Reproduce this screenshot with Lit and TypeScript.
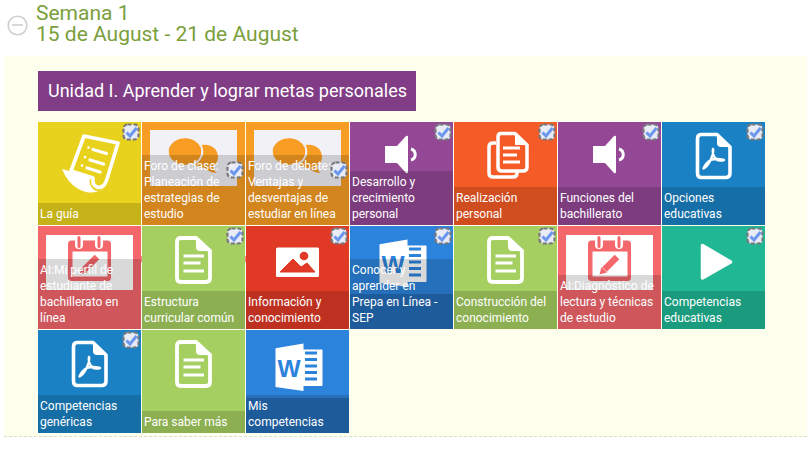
import { LitElement, html, svg, css } from 'lit'
import { customElement } from 'lit/decorators.js'

const ink = '#fff'

const docFrame = svg`
  <path d="M39 12.5H55L68 25V51Q68 55.500 63.500 55.500H39.500Q35.500 55.500 35.500 51V17Q35.500 12.500 39 12.500Z" fill="none" stroke=${ink} stroke-width="3.600" stroke-linejoin="round"/>
  <path d="M55 12.500V21Q55 25 59 25H68Z" fill=${ink}/>
`

const icons: Record<string, unknown> = {
  guide: svg`
    <path d="M46 14L80 21L69 57Q66 67 59 65Q54 63 55 56L33 49Z" fill="none" stroke=${ink} stroke-width="3.600" stroke-linejoin="round"/>
    <path d="M24 47L52 55Q50 63 56 68Q62 71 66 66Q58 72 48 70Q32 66 24 47Z" fill=${ink}/>
    <path d="M55 27.500L68.500 31.500M52 38L65.500 42M49 46L62 50" stroke=${ink} stroke-width="3.200" stroke-linecap="round"/>
    <path d="M50.500 25.500v.1M47 35v.1M44 43.500v.1" stroke=${ink} stroke-width="2.600" stroke-linecap="round"/>
  `,
  chat: svg`
    <rect x="8" y="8" width="87" height="56" fill="#f1f1f6"/>
    <path d="M60 23C69 22 76 27 76 35C76 39 74 42 71 44C71 47 73 50 75 51C69 51 65 48 63 46C56 46 50 42 50 35Z" fill="#f89d23"/>
    <ellipse cx="43" cy="29.500" rx="17.300" ry="14.300" fill="#f89d23" stroke="#f1f1f6" stroke-width="2"/>
  `,
  sound: svg`
    <path d="M35 24H47L56 14Q58 13 58 15V50Q58 52 56 51L47 41H35Z" fill=${ink}/>
    <path d="M61 27A5.700 5.700 0 0 1 61 38" fill="none" stroke=${ink} stroke-width="3"/>
  `,
  docs: svg`
    <path d="M47 11.500H61L73 23V45Q73 49 69 49H48Q44 49 44 45V15Q44 11.500 47 11.500Z" fill="none" stroke=${ink} stroke-width="3.500" stroke-linejoin="round"/>
    <path d="M61 11.500V23H73Z" fill=${ink}/>
    <path d="M42 21H39Q35 21 35 25V51Q35 55 39 55H59Q63 55 63 51V49" fill="none" stroke=${ink} stroke-width="3.500"/>
    <path d="M49 26H66M49 33H63M49 40H66" stroke=${ink} stroke-width="3"/>
  `,
  pdf: svg`
    ${docFrame}
    <path d="M41.500 46.500Q46 44 49 37Q52 30 51 27Q50 33 54 37Q57 39.500 62 38Q54 36 49 38Q44 40 41.500 46.500Z" fill="none" stroke=${ink} stroke-width="2.400" stroke-linejoin="round"/>
  `,
  doc: svg`
    <path d="M39 12H54L68 25V52Q68 56 64 56H39Q35 56 35 52V16Q35 12 39 12Z" fill="none" stroke=${ink} stroke-width="3.800" stroke-linejoin="round"/>
    <path d="M54 12V21Q54 25 58 25H68Z" fill=${ink}/>
    <path d="M41.500 30H62M41.500 37H58.500M41.500 45H62" stroke=${ink} stroke-width="3.200"/>
  `,
  image: svg`
    <rect x="30" y="21.500" width="43" height="29.500" rx="1.500" fill=${ink}/>
    <circle cx="58" cy="30" r="4.300" fill="#e03a27"/>
    <path d="M34 46L47 33L55 41L61 37L69 46Z" fill="#e03a27" stroke="#e03a27" stroke-linejoin="round"/>
  `,
  calendar: svg`
    <rect x="8" y="9" width="87" height="55" fill="#fff"/>
    <rect x="30" y="14.500" width="43" height="40.500" rx="3.500" fill="#f4676b"/>
    <rect x="34.500" y="25.500" width="35" height="25" fill="#fff"/>
    <rect x="37" y="12" width="8" height="11" rx="4" fill="#fff"/>
    <rect x="57" y="12" width="8" height="11" rx="4" fill="#fff"/>
    <path d="M41 11.500V20.500M61 11.500V20.500" stroke="#f4676b" stroke-width="3" stroke-linecap="round"/>
    <path d="M46.500 43.500L59 31" stroke="#f4676b" stroke-width="6.500"/>
    <path d="M41.500 48.500L43.500 41L49 46.500Z" fill="#f4676b"/>
  `,
  play: svg`
    <path d="M40.500 19.500L68.500 36L40.500 52Z" fill=${ink} stroke=${ink} stroke-width="3.500" stroke-linejoin="round"/>
  `,
  word: svg`
    <rect x="0" y="68" width="103" height="35" fill="rgba(0,0,0,.17)"/>
    <rect x="55" y="19.500" width="21.500" height="36.500" rx="1" fill=${ink}/>
    <path d="M59 23H71M59 29.500H71M59 36H71M59 42.500H71M59 49H71" stroke="#2c83dc" stroke-width="3.200"/>
    <path d="M29.500 18.300L57.500 13.500V61L29.500 57Z" fill=${ink}/>
    <text x="43" y="47" text-anchor="middle" font-family="'Liberation Sans', sans-serif" font-weight="700" font-size="24.500" fill="#2c83dc">W</text>
  `,
}

type Tile = {
  label: string
  color: string
  icon: string
  check?: boolean
  low?: boolean
  notch?: boolean
}

const yellow = '#e8d21d'
const orange = '#f89d23'
const purple = '#934795'
const flame = '#f55b26'
const blue = '#1a82c4'
const coral = '#f4676b'
const green = '#a5cf60'
const red = '#e03a27'
const azure = '#2c83dc'
const teal = '#1fb794'

const tiles: Tile[] = [
  { label: 'La guía', color: yellow, icon: 'guide', check: true },
  { label: 'Foro de clase: Planeación de estrategias de estudio', color: orange, icon: 'chat', check: true, low: true },
  { label: 'Foro de debate: Ventajas y desventajas de estudiar en línea', color: orange, icon: 'chat', check: true, low: true },
  { label: 'Desarrollo y crecimiento personal', color: purple, icon: 'sound', check: true },
  { label: 'Realización personal', color: flame, icon: 'docs', check: true },
  { label: 'Funciones del bachillerato', color: purple, icon: 'sound', check: true },
  { label: 'Opciones educativas', color: blue, icon: 'pdf', check: true },
  { label: 'AI:Mi perfil de estudiante de bachillerato en línea', color: coral, icon: 'calendar', notch: true },
  { label: 'Estructura curricular común', color: green, icon: 'doc', check: true, notch: true },
  { label: 'Información y conocimiento', color: red, icon: 'image', check: true },
  { label: 'Conocer y aprender en Prepa en Línea - SEP', color: azure, icon: 'word', check: true },
  { label: 'Construcción del conocimiento', color: green, icon: 'doc', check: true },
  { label: 'AI:Diagnóstico de lectura y técnicas de estudio', color: coral, icon: 'calendar' },
  { label: 'Competencias educativas', color: teal, icon: 'play', check: true },
  { label: 'Competencias genéricas', color: blue, icon: 'pdf', check: true },
  { label: 'Para saber más', color: green, icon: 'doc' },
  { label: 'Mis competencias', color: azure, icon: 'word' },
]

@customElement('app-root')
export class AppRoot extends LitElement {
  static styles = css`
    :host {
      display: block;
      font-family: Roboto, 'Liberation Sans', sans-serif;
    }
    .week {
      height: 56px;
      box-sizing: border-box;
      padding: 3px 0 0 7px;
      display: flex;
      gap: 8px;
    }
    .toggle {
      width: 21px;
      height: 21px;
      margin-top: 12px;
      flex: none;
    }
    .title {
      font-size: 21px;
      line-height: 21px;
      color: #7a9f3c;
    }
    .panel {
      margin-left: 4px;
      padding: 15px 0 3px 34px;
      background: #ffffee;
      border-bottom: 1px dashed #ddddcc;
    }
    .unit {
      display: inline-block;
      height: 40px;
      line-height: 40px;
      padding: 0 9px 0 10px;
      font-size: 18px;
      color: #fff;
      background: #803d85;
    }
    .grid {
      margin-top: 11px;
      display: grid;
      grid-template-columns: repeat(7, 103px);
      grid-auto-rows: 103px;
      gap: 1px;
    }
    .tile {
      position: relative;
    }
    .tile > svg {
      display: block;
    }
    .label {
      position: absolute;
      left: 0;
      right: 0;
      bottom: 0;
      padding: 3px 7px 3px 2px;
      font-size: 12px;
      line-height: 16px;
      color: #fff;
      background: rgba(0, 0, 0, 0.15);
    }
    .check {
      position: absolute;
      top: 1px;
      right: 1px;
      width: 18px;
      height: 18px;
    }
    .check.low {
      top: 39px;
    }
    .notch {
      position: absolute;
      top: 30px;
      right: -1px;
      width: 1px;
      height: 6px;
      background: #f6898c;
    }
  `

  renderCheck(low?: boolean) {
    return html`
      <svg class="check ${low ? 'low' : ''}" viewBox="0 0 18 18">
        <rect x="1.500" y="1.500" width="15" height="15" rx="4" fill="#e9ebf5" stroke="#77787c" stroke-width="2.200" stroke-dasharray="4 2"/>
        <path d="M4.500 9.500L8 13L14.500 5" fill="none" stroke="#6c97ee" stroke-width="3"/>
      </svg>
    `
  }

  render() {
    return html`
      <div class="week">
        <svg class="toggle" viewBox="0 0 21 21">
          <circle cx="10.500" cy="10.500" r="9.300" fill="none" stroke="#cfcfcf" stroke-width="1.600"/>
          <path d="M5 10H16" stroke="#cfcfcf" stroke-width="1.600"/>
        </svg>
        <div class="title">Semana 1<br />15 de August - 21 de August</div>
      </div>
      <div class="panel">
        <div class="unit">Unidad I. Aprender y lograr metas personales</div>
        <div class="grid">
          ${tiles.map(
            (t) => html`
              <div class="tile" style="background:${t.color}">
                <svg width="103" height="103" viewBox="0 0 103 103">${icons[t.icon]}</svg>
                <div class="label">${t.label}</div>
                ${t.check ? this.renderCheck(t.low) : ''}
                ${t.notch ? html`<span class="notch"></span>` : ''}
              </div>
            `,
          )}
        </div>
      </div>
    `
  }
}
